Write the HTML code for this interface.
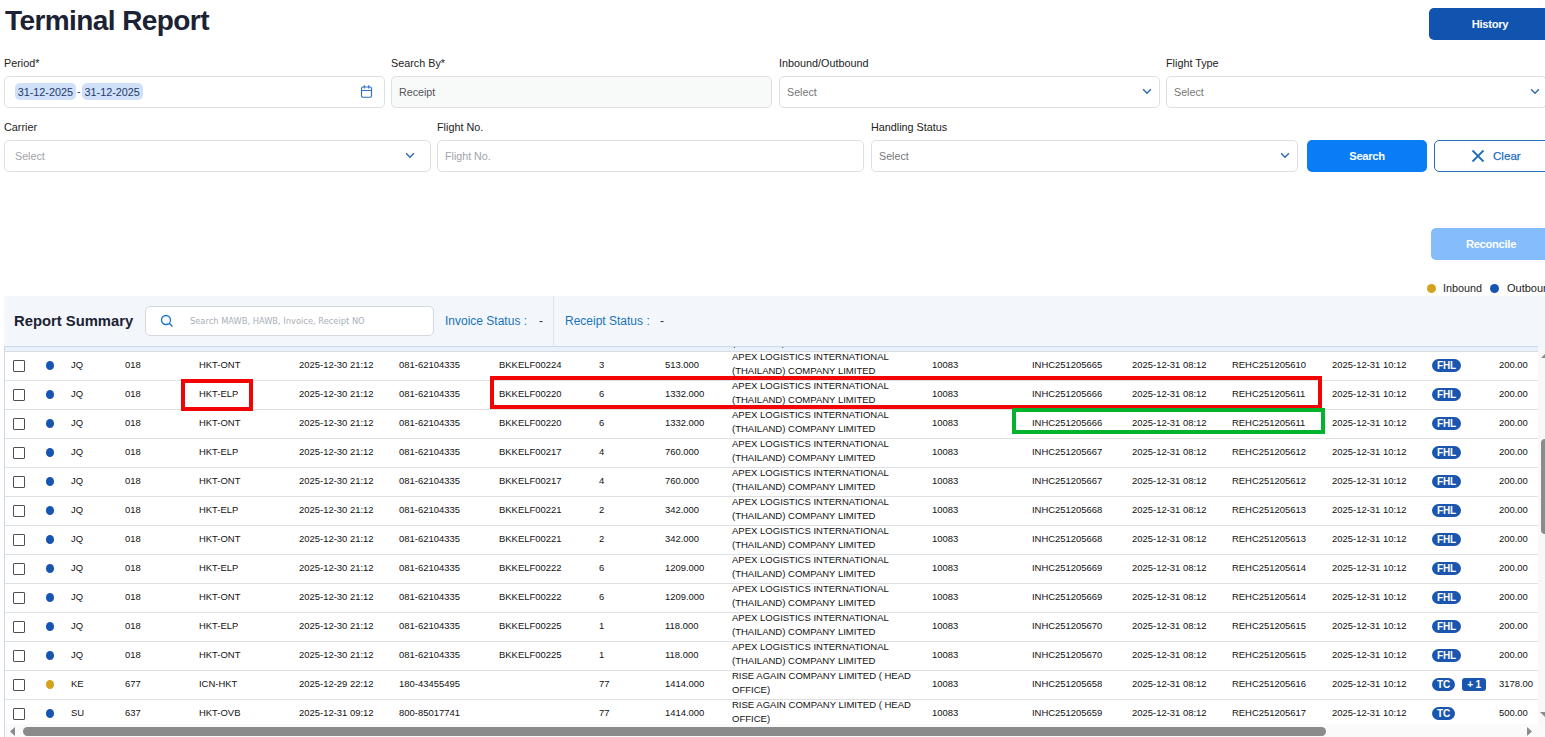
<!DOCTYPE html>
<html lang="en"><head><meta charset="utf-8"><title>Terminal Report</title>
<style>
*{box-sizing:border-box;margin:0;padding:0}
html,body{width:1545px;height:737px;overflow:hidden;background:#fff}
body{font-family:"Liberation Sans",Arial,sans-serif;color:#1f2937;position:relative}
.abs{position:absolute}
h1{position:absolute;left:5px;top:4px;font-size:28px;line-height:34px;font-weight:700;color:#1b2233;letter-spacing:-0.58px;white-space:nowrap}
.btn{position:absolute;border-radius:5px;font-weight:700;font-size:11.2px;color:#fff;text-align:center;white-space:nowrap;letter-spacing:-0.3px}
.lbl{position:absolute;font-size:10.8px;line-height:14px;color:#222;white-space:nowrap}
.inp{position:absolute;height:32px;border:1px solid #dddfe3;border-radius:5px;background:#fff;font-size:10.7px;line-height:30px;padding-left:11px;color:#a0a4a9;white-space:nowrap}
.inp.dis{background:#f8f9f9;color:#555}
.hl{display:inline-block;height:17px;line-height:18px;padding:0 2.7px;border-radius:5px;background:#cfe0f8;color:#1f3a68;font-size:10.82px;vertical-align:middle;position:relative;top:-1.5px}
.chev{position:absolute;right:11px;top:11px;width:10px;height:8px}
.panel{position:absolute;left:4px;top:296px;width:1541px;height:441px;background:#f3f7fb}
.row{position:absolute;left:0;width:1534px;height:29px;border-bottom:1px solid #dfe0e3;background:#fff;font-size:9.45px;line-height:14px;color:#111}
.c{position:absolute;top:0;height:25px;line-height:25px;white-space:nowrap}
.c.nm{line-height:14px;top:-1.7px;font-size:9.52px}
.cb{position:absolute;left:8px;top:8px;width:12px;height:12px;border:1.2px solid #505050;border-radius:1px;background:#fff}
.dot{position:absolute;left:40.7px;top:8.6px;width:8.7px;height:9.4px;border-radius:50%}
.dot.b{background:#1755b3}.dot.y{background:#d4a31e}
.bd{display:inline-block;height:13px;line-height:13px;padding:0 5.1px;border-radius:6.5px;background:#1a56b0;color:#fff;font-size:10px;letter-spacing:-0.2px;font-weight:700;margin-right:7px;vertical-align:middle}
.bd.sq{border-radius:3px}
.bds{line-height:25px;top:0px}
.mark{position:absolute;border:4px solid #f20404}
</style></head><body>
<h1>Terminal Report</h1>
<div class="btn" style="left:1429px;top:8px;width:130px;height:32px;line-height:33px;background:#1054b0;padding-right:8px">History</div>

<div class="lbl" style="left:4px;top:56px">Period*</div>
<div class="lbl" style="left:391px;top:56px">Search By*</div>
<div class="lbl" style="left:779px;top:56px">Inbound/Outbound</div>
<div class="lbl" style="left:1166px;top:56px">Flight Type</div>

<div class="inp" style="left:4px;top:76px;width:381px;padding-left:10px;color:#1f3a68"><span class="hl">31-12-2025</span><span style="margin:0 1.3px;position:relative;top:-1px">-</span><span class="hl">31-12-2025</span>
<svg class="abs" style="right:11px;top:7px" width="13" height="14" viewBox="0 0 13 14" fill="none" stroke="#2f72c4" stroke-width="1.15"><rect x="1.5" y="3" width="10" height="10.2" rx="1.5"/><path d="M1.5 6.5h10M4.3 1.2v3.2M8.7 1.2v3.2"/></svg></div>
<div class="inp dis" style="left:391px;top:76px;width:381px;padding-left:7px">Receipt</div>
<div class="inp" style="left:779px;top:76px;width:381px;padding-left:7px;color:#777">Select<svg class="chev" style="right:7.4px" viewBox="0 0 10 8" fill="none" stroke="#2c69ad" stroke-width="1.35"><path d="M1.1 1.3L5 5.3L8.9 1.3"/></svg></div>
<div class="inp" style="left:1166px;top:76px;width:381px;padding-left:7px;color:#777">Select<svg class="chev" style="right:6.4px" viewBox="0 0 10 8" fill="none" stroke="#2c69ad" stroke-width="1.35"><path d="M1.1 1.3L5 5.3L8.9 1.3"/></svg></div>

<div class="lbl" style="left:4px;top:120px">Carrier</div>
<div class="lbl" style="left:437px;top:120px">Flight No.</div>
<div class="lbl" style="left:871px;top:120px">Handling Status</div>

<div class="inp" style="left:4px;top:140px;width:427px;padding-left:10px">Select<svg class="chev" style="right:14.7px" viewBox="0 0 10 8" fill="none" stroke="#2c69ad" stroke-width="1.35"><path d="M1.1 1.3L5 5.3L8.9 1.3"/></svg></div>
<div class="inp" style="left:437px;top:140px;width:427px;padding-left:7px">Flight No.</div>
<div class="inp" style="left:871px;top:140px;width:427px;padding-left:7px;color:#777">Select<svg class="chev" style="right:7.4px" viewBox="0 0 10 8" fill="none" stroke="#2c69ad" stroke-width="1.35"><path d="M1.1 1.3L5 5.3L8.9 1.3"/></svg></div>

<div class="btn" style="left:1307px;top:140px;width:120px;height:32px;line-height:33px;background:#0a7cf5">Search</div>
<div class="btn" style="left:1434px;top:140px;width:130px;height:32px;line-height:30px;background:#fff;border:1px solid #2470b8;color:#1f6fbf;text-align:left;padding-left:58px;font-weight:400;letter-spacing:0;font-size:11.6px;-webkit-text-stroke:0.25px #1f6fbf">Clear
<svg class="abs" style="left:36px;top:8px" width="14" height="14" viewBox="0 0 14 14" fill="none" stroke="#1f6fbf" stroke-width="1.8"><path d="M1.5 1.5l11 11M12.5 1.5l-11 11"/></svg></div>

<div class="btn" style="left:1431px;top:228px;width:130px;height:32px;line-height:33px;background:#85bcfa;padding-right:10px">Reconcile</div>

<div class="abs" style="left:1427px;top:284px;width:9px;height:9px;border-radius:50%;background:#d4a31e"></div>
<div class="lbl" style="left:1443px;top:281px;font-size:10.8px">Inbound</div>
<div class="abs" style="left:1490px;top:284px;width:9px;height:9px;border-radius:50%;background:#1755b3"></div>
<div class="lbl" style="left:1507px;top:281px;font-size:11px">Outbound</div>

<div class="panel">
  <div class="abs" style="left:10px;top:16px;font-size:14.8px;line-height:18px;font-weight:700;color:#1b2233;white-space:nowrap">Report Summary</div>
  <div class="abs" style="left:141px;top:10px;width:289px;height:30px;border:1px solid #d5d9df;border-radius:5px;background:#fff">
    <svg class="abs" style="left:14px;top:7px" width="14" height="14" viewBox="0 0 14 14" fill="none" stroke="#1a73c8" stroke-width="1.3"><circle cx="6" cy="6" r="4.5"/><path d="M9.3 9.3l3.2 3.2"/></svg>
    <span class="abs" style="left:44px;top:0;line-height:28px;font-size:8.3px;color:#a9afb8;font-family:'DejaVu Sans',sans-serif;white-space:nowrap">Search MAWB, HAWB, Invoice, Receipt NO</span>
  </div>
  <div class="abs" style="left:441px;top:17px;font-size:12px;line-height:16px;color:#1a73b8;white-space:nowrap">Invoice Status :</div>
  <div class="abs" style="left:535px;top:17px;font-size:12px;line-height:16px;color:#333">-</div>
  <div class="abs" style="left:549px;top:0;width:1px;height:50px;background:#d9e6f3"></div>
  <div class="abs" style="left:561px;top:17px;font-size:12px;line-height:16px;color:#1a73b8;white-space:nowrap">Receipt Status :</div>
  <div class="abs" style="left:656px;top:17px;font-size:12px;line-height:16px;color:#333">-</div>
  <!-- header strip -->
  <div class="abs" style="left:0;top:50px;width:1534px;height:6px;background:#e9f1fb;border-top:1px solid #c9dcef;border-bottom:1px solid #d9dde2;border-left:1px solid #c9d8e8"></div>
  <div class="abs" style="left:728px;top:51px;width:200px;height:1.3px;overflow:hidden"><span class="abs" style="left:0;top:-11.2px;font-size:9.45px;line-height:13.6px;color:#111;white-space:nowrap">(THAILAND) COMPANY LIMITED</span></div>
  <div class="abs" id="grid" style="left:0;top:56px;width:1534px;height:372px;overflow:hidden;border-left:1px solid #cbd8e8;background:#fff">
<div class="row" style="top:0px"><i class="cb"></i><i class="dot b"></i><span class="c" style="left:66px">JQ</span><span class="c" style="left:120px">018</span><span class="c" style="left:194px">HKT-ONT</span><span class="c" style="left:294px">2025-12-30 21:12</span><span class="c" style="left:394px">081-62104335</span><span class="c" style="left:494px">BKKELF00224</span><span class="c" style="left:594px">3</span><span class="c" style="left:660px">513.000</span><span class="c nm" style="left:727px">APEX LOGISTICS INTERNATIONAL<br>(THAILAND) COMPANY LIMITED</span><span class="c" style="left:927px">10083</span><span class="c" style="left:1027px">INHC251205665</span><span class="c" style="left:1127px">2025-12-31 08:12</span><span class="c" style="left:1227px">REHC251205610</span><span class="c" style="left:1327px">2025-12-31 10:12</span><span class="c bds" style="left:1427px"><b class="bd">FHL</b></span><span class="c" style="left:1494px">200.00</span></div>
<div class="row" style="top:29px"><i class="cb"></i><i class="dot b"></i><span class="c" style="left:66px">JQ</span><span class="c" style="left:120px">018</span><span class="c" style="left:194px">HKT-ELP</span><span class="c" style="left:294px">2025-12-30 21:12</span><span class="c" style="left:394px">081-62104335</span><span class="c" style="left:494px">BKKELF00220</span><span class="c" style="left:594px">6</span><span class="c" style="left:660px">1332.000</span><span class="c nm" style="left:727px">APEX LOGISTICS INTERNATIONAL<br>(THAILAND) COMPANY LIMITED</span><span class="c" style="left:927px">10083</span><span class="c" style="left:1027px">INHC251205666</span><span class="c" style="left:1127px">2025-12-31 08:12</span><span class="c" style="left:1227px">REHC251205611</span><span class="c" style="left:1327px">2025-12-31 10:12</span><span class="c bds" style="left:1427px"><b class="bd">FHL</b></span><span class="c" style="left:1494px">200.00</span></div>
<div class="row" style="top:58px"><i class="cb"></i><i class="dot b"></i><span class="c" style="left:66px">JQ</span><span class="c" style="left:120px">018</span><span class="c" style="left:194px">HKT-ONT</span><span class="c" style="left:294px">2025-12-30 21:12</span><span class="c" style="left:394px">081-62104335</span><span class="c" style="left:494px">BKKELF00220</span><span class="c" style="left:594px">6</span><span class="c" style="left:660px">1332.000</span><span class="c nm" style="left:727px">APEX LOGISTICS INTERNATIONAL<br>(THAILAND) COMPANY LIMITED</span><span class="c" style="left:927px">10083</span><span class="c" style="left:1027px">INHC251205666</span><span class="c" style="left:1127px">2025-12-31 08:12</span><span class="c" style="left:1227px">REHC251205611</span><span class="c" style="left:1327px">2025-12-31 10:12</span><span class="c bds" style="left:1427px"><b class="bd">FHL</b></span><span class="c" style="left:1494px">200.00</span></div>
<div class="row" style="top:87px"><i class="cb"></i><i class="dot b"></i><span class="c" style="left:66px">JQ</span><span class="c" style="left:120px">018</span><span class="c" style="left:194px">HKT-ELP</span><span class="c" style="left:294px">2025-12-30 21:12</span><span class="c" style="left:394px">081-62104335</span><span class="c" style="left:494px">BKKELF00217</span><span class="c" style="left:594px">4</span><span class="c" style="left:660px">760.000</span><span class="c nm" style="left:727px">APEX LOGISTICS INTERNATIONAL<br>(THAILAND) COMPANY LIMITED</span><span class="c" style="left:927px">10083</span><span class="c" style="left:1027px">INHC251205667</span><span class="c" style="left:1127px">2025-12-31 08:12</span><span class="c" style="left:1227px">REHC251205612</span><span class="c" style="left:1327px">2025-12-31 10:12</span><span class="c bds" style="left:1427px"><b class="bd">FHL</b></span><span class="c" style="left:1494px">200.00</span></div>
<div class="row" style="top:116px"><i class="cb"></i><i class="dot b"></i><span class="c" style="left:66px">JQ</span><span class="c" style="left:120px">018</span><span class="c" style="left:194px">HKT-ONT</span><span class="c" style="left:294px">2025-12-30 21:12</span><span class="c" style="left:394px">081-62104335</span><span class="c" style="left:494px">BKKELF00217</span><span class="c" style="left:594px">4</span><span class="c" style="left:660px">760.000</span><span class="c nm" style="left:727px">APEX LOGISTICS INTERNATIONAL<br>(THAILAND) COMPANY LIMITED</span><span class="c" style="left:927px">10083</span><span class="c" style="left:1027px">INHC251205667</span><span class="c" style="left:1127px">2025-12-31 08:12</span><span class="c" style="left:1227px">REHC251205612</span><span class="c" style="left:1327px">2025-12-31 10:12</span><span class="c bds" style="left:1427px"><b class="bd">FHL</b></span><span class="c" style="left:1494px">200.00</span></div>
<div class="row" style="top:145px"><i class="cb"></i><i class="dot b"></i><span class="c" style="left:66px">JQ</span><span class="c" style="left:120px">018</span><span class="c" style="left:194px">HKT-ELP</span><span class="c" style="left:294px">2025-12-30 21:12</span><span class="c" style="left:394px">081-62104335</span><span class="c" style="left:494px">BKKELF00221</span><span class="c" style="left:594px">2</span><span class="c" style="left:660px">342.000</span><span class="c nm" style="left:727px">APEX LOGISTICS INTERNATIONAL<br>(THAILAND) COMPANY LIMITED</span><span class="c" style="left:927px">10083</span><span class="c" style="left:1027px">INHC251205668</span><span class="c" style="left:1127px">2025-12-31 08:12</span><span class="c" style="left:1227px">REHC251205613</span><span class="c" style="left:1327px">2025-12-31 10:12</span><span class="c bds" style="left:1427px"><b class="bd">FHL</b></span><span class="c" style="left:1494px">200.00</span></div>
<div class="row" style="top:174px"><i class="cb"></i><i class="dot b"></i><span class="c" style="left:66px">JQ</span><span class="c" style="left:120px">018</span><span class="c" style="left:194px">HKT-ONT</span><span class="c" style="left:294px">2025-12-30 21:12</span><span class="c" style="left:394px">081-62104335</span><span class="c" style="left:494px">BKKELF00221</span><span class="c" style="left:594px">2</span><span class="c" style="left:660px">342.000</span><span class="c nm" style="left:727px">APEX LOGISTICS INTERNATIONAL<br>(THAILAND) COMPANY LIMITED</span><span class="c" style="left:927px">10083</span><span class="c" style="left:1027px">INHC251205668</span><span class="c" style="left:1127px">2025-12-31 08:12</span><span class="c" style="left:1227px">REHC251205613</span><span class="c" style="left:1327px">2025-12-31 10:12</span><span class="c bds" style="left:1427px"><b class="bd">FHL</b></span><span class="c" style="left:1494px">200.00</span></div>
<div class="row" style="top:203px"><i class="cb"></i><i class="dot b"></i><span class="c" style="left:66px">JQ</span><span class="c" style="left:120px">018</span><span class="c" style="left:194px">HKT-ELP</span><span class="c" style="left:294px">2025-12-30 21:12</span><span class="c" style="left:394px">081-62104335</span><span class="c" style="left:494px">BKKELF00222</span><span class="c" style="left:594px">6</span><span class="c" style="left:660px">1209.000</span><span class="c nm" style="left:727px">APEX LOGISTICS INTERNATIONAL<br>(THAILAND) COMPANY LIMITED</span><span class="c" style="left:927px">10083</span><span class="c" style="left:1027px">INHC251205669</span><span class="c" style="left:1127px">2025-12-31 08:12</span><span class="c" style="left:1227px">REHC251205614</span><span class="c" style="left:1327px">2025-12-31 10:12</span><span class="c bds" style="left:1427px"><b class="bd">FHL</b></span><span class="c" style="left:1494px">200.00</span></div>
<div class="row" style="top:232px"><i class="cb"></i><i class="dot b"></i><span class="c" style="left:66px">JQ</span><span class="c" style="left:120px">018</span><span class="c" style="left:194px">HKT-ONT</span><span class="c" style="left:294px">2025-12-30 21:12</span><span class="c" style="left:394px">081-62104335</span><span class="c" style="left:494px">BKKELF00222</span><span class="c" style="left:594px">6</span><span class="c" style="left:660px">1209.000</span><span class="c nm" style="left:727px">APEX LOGISTICS INTERNATIONAL<br>(THAILAND) COMPANY LIMITED</span><span class="c" style="left:927px">10083</span><span class="c" style="left:1027px">INHC251205669</span><span class="c" style="left:1127px">2025-12-31 08:12</span><span class="c" style="left:1227px">REHC251205614</span><span class="c" style="left:1327px">2025-12-31 10:12</span><span class="c bds" style="left:1427px"><b class="bd">FHL</b></span><span class="c" style="left:1494px">200.00</span></div>
<div class="row" style="top:261px"><i class="cb"></i><i class="dot b"></i><span class="c" style="left:66px">JQ</span><span class="c" style="left:120px">018</span><span class="c" style="left:194px">HKT-ELP</span><span class="c" style="left:294px">2025-12-30 21:12</span><span class="c" style="left:394px">081-62104335</span><span class="c" style="left:494px">BKKELF00225</span><span class="c" style="left:594px">1</span><span class="c" style="left:660px">118.000</span><span class="c nm" style="left:727px">APEX LOGISTICS INTERNATIONAL<br>(THAILAND) COMPANY LIMITED</span><span class="c" style="left:927px">10083</span><span class="c" style="left:1027px">INHC251205670</span><span class="c" style="left:1127px">2025-12-31 08:12</span><span class="c" style="left:1227px">REHC251205615</span><span class="c" style="left:1327px">2025-12-31 10:12</span><span class="c bds" style="left:1427px"><b class="bd">FHL</b></span><span class="c" style="left:1494px">200.00</span></div>
<div class="row" style="top:290px"><i class="cb"></i><i class="dot b"></i><span class="c" style="left:66px">JQ</span><span class="c" style="left:120px">018</span><span class="c" style="left:194px">HKT-ONT</span><span class="c" style="left:294px">2025-12-30 21:12</span><span class="c" style="left:394px">081-62104335</span><span class="c" style="left:494px">BKKELF00225</span><span class="c" style="left:594px">1</span><span class="c" style="left:660px">118.000</span><span class="c nm" style="left:727px">APEX LOGISTICS INTERNATIONAL<br>(THAILAND) COMPANY LIMITED</span><span class="c" style="left:927px">10083</span><span class="c" style="left:1027px">INHC251205670</span><span class="c" style="left:1127px">2025-12-31 08:12</span><span class="c" style="left:1227px">REHC251205615</span><span class="c" style="left:1327px">2025-12-31 10:12</span><span class="c bds" style="left:1427px"><b class="bd">FHL</b></span><span class="c" style="left:1494px">200.00</span></div>
<div class="row" style="top:319px"><i class="cb"></i><i class="dot y"></i><span class="c" style="left:66px">KE</span><span class="c" style="left:120px">677</span><span class="c" style="left:194px">ICN-HKT</span><span class="c" style="left:294px">2025-12-29 22:12</span><span class="c" style="left:394px">180-43455495</span><span class="c" style="left:594px">77</span><span class="c" style="left:660px">1414.000</span><span class="c nm" style="left:727px">RISE AGAIN COMPANY LIMITED ( HEAD<br>OFFICE)</span><span class="c" style="left:927px">10083</span><span class="c" style="left:1027px">INHC251205658</span><span class="c" style="left:1127px">2025-12-31 08:12</span><span class="c" style="left:1227px">REHC251205616</span><span class="c" style="left:1327px">2025-12-31 10:12</span><span class="c bds" style="left:1427px"><b class="bd">TC</b><b class="bd sq">+ 1</b></span><span class="c" style="left:1494px">3178.00</span></div>
<div class="row" style="top:348px"><i class="cb"></i><i class="dot b"></i><span class="c" style="left:66px">SU</span><span class="c" style="left:120px">637</span><span class="c" style="left:194px">HKT-OVB</span><span class="c" style="left:294px">2025-12-31 09:12</span><span class="c" style="left:394px">800-85017741</span><span class="c" style="left:594px">77</span><span class="c" style="left:660px">1414.000</span><span class="c nm" style="left:727px">RISE AGAIN COMPANY LIMITED ( HEAD<br>OFFICE)</span><span class="c" style="left:927px">10083</span><span class="c" style="left:1027px">INHC251205659</span><span class="c" style="left:1127px">2025-12-31 08:12</span><span class="c" style="left:1227px">REHC251205617</span><span class="c" style="left:1327px">2025-12-31 10:12</span><span class="c bds" style="left:1427px"><b class="bd">TC</b></span><span class="c" style="left:1494px">500.00</span></div>
  </div>
  <!-- annotation marks (page coords minus panel offset 4,296) -->
  <div class="mark" style="left:177px;top:83px;width:72px;height:32px"></div>
  <div class="mark" style="left:486px;top:80px;width:832px;height:33px"></div>
  <div class="mark" style="left:1008px;top:112px;width:313px;height:26px;border-color:#04b32c"></div>
  <!-- v scrollbar -->
  <div class="abs" style="left:1534px;top:51px;width:7px;height:377px;background:#f8f8f8"></div>
  <div class="abs" style="left:1537px;top:143px;width:9px;height:95px;border-radius:4px;background:#8b8b8b"></div>
  <svg class="abs" style="left:1537px;top:57px" width="5" height="5" viewBox="0 0 5 5"><path d="M0 5L5 0v5z" fill="#8b8b8b"/></svg>
  <svg class="abs" style="left:1536px;top:416px" width="5" height="5" viewBox="0 0 5 5"><path d="M0 0h5v5z" fill="#8b8b8b"/></svg>
  <!-- h scrollbar -->
  <div class="abs" style="left:0;top:428px;width:1541px;height:13px;background:#fafafa;border-left:1px solid #cbd8e8"></div>
  <div class="abs" style="left:19px;top:431px;width:1303px;height:9px;border-radius:5px;background:#8b8b8b"></div>
  <svg class="abs" style="left:6px;top:431px" width="5" height="9" viewBox="0 0 5 9"><path d="M5 0v9L0 4.5z" fill="#8b8b8b"/></svg>
  <svg class="abs" style="left:1523px;top:431px" width="5" height="9" viewBox="0 0 5 9"><path d="M0 0v9l5-4.5z" fill="#8b8b8b"/></svg>
</div>
</body></html>
